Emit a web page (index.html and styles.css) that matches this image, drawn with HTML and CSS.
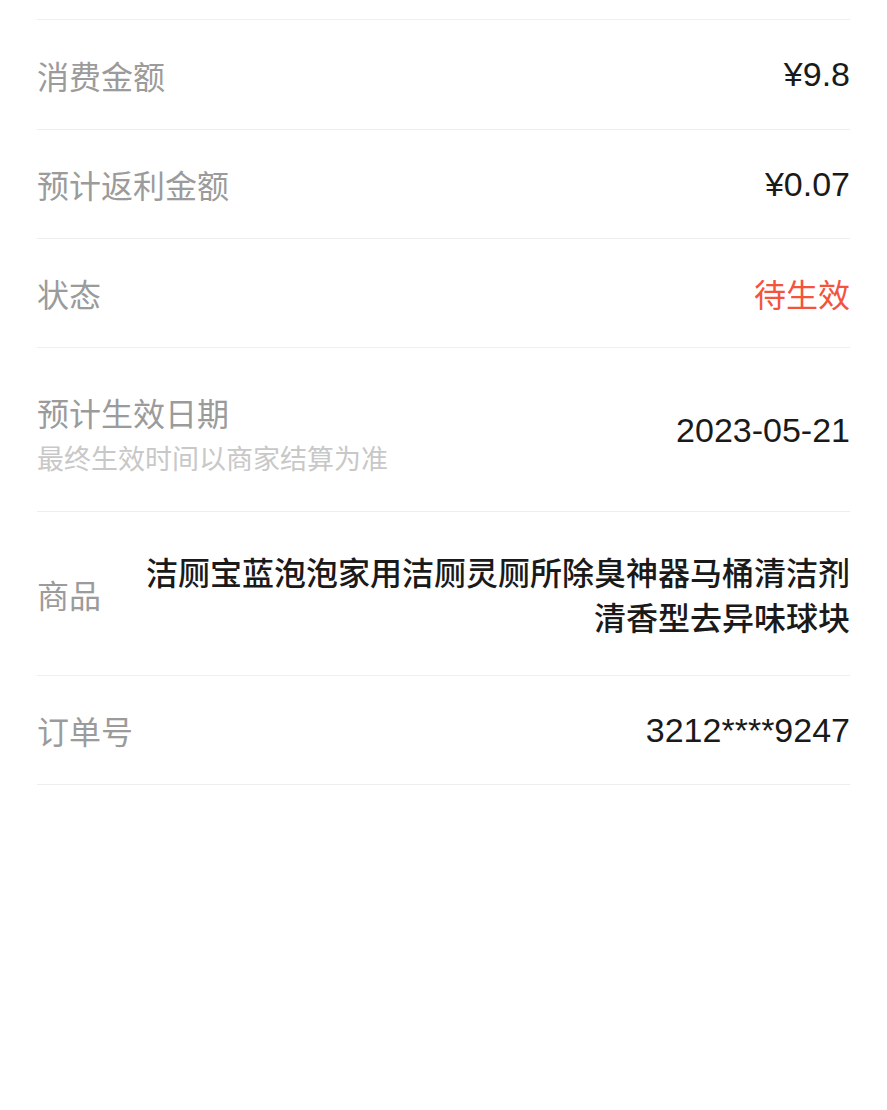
FILE: index.html
```html
<!DOCTYPE html>
<html lang="zh-CN">
<head>
  <meta charset="UTF-8">
  <meta name="viewport" content="width=device-width, initial-scale=1.0">
  <title>订单详情</title>

  <link rel="stylesheet" href="styles.css">
</head>
<body>
  <div class="list">
    <div class="top"></div>
    <div class="item">
      <div class="label">消费金额</div>
      <div class="value">¥9.8</div>
    </div>
    <div class="item">
      <div class="label">预计返利金额</div>
      <div class="value">¥0.07</div>
    </div>
    <div class="item">
      <div class="label">状态</div>
      <div class="value red">待生效</div>
    </div>
    <div class="item item-tall">
      <div class="label">
        <div>预计生效日期</div>
        <div class="sub">最终生效时间以商家结算为准</div>
      </div>
      <div class="value">2023-05-21</div>
    </div>
    <div class="item item-goods">
      <div class="label">商品</div>
      <div class="value goods">洁厕宝蓝泡泡家用洁厕灵厕所除臭神器马桶清洁剂清香型去异味球块</div>
    </div>
    <div class="item">
      <div class="label">订单号</div>
      <div class="value">3212****9247</div>
    </div>
  </div>
</body>
</html>
```

FILE: styles.css
```css
body {
  margin: 0;
  background-color: #fff;
  font-family: "Noto Sans CJK SC", "Noto Sans", sans-serif;
}

.list {
  padding: 0 37px;
}
.top {
  height: 19px;
  border-bottom: 1px solid #eee;
}

.item {
  box-sizing: border-box;
  display: flex;
  justify-content: space-between;
  align-items: center;
  min-height: 109px;
  border-bottom: 1px solid #eee;
}
.top + .item {
  min-height: 110px;
}
.label {
  flex-shrink: 0;
  font-size: 32px;
  color: #9b9b9b;
}
.value {
  font-family: "Liberation Sans", "Noto Sans CJK SC", sans-serif;
  font-size: 34px;
  color: #1a1a1a;
  text-align: right;
}
.red {
  font-family: "Noto Sans CJK SC", sans-serif;
  font-size: 32px;
  color: #f4533c;
}

/* 两行标签 */
.item-tall {
  padding: 41px 0 30px;
}
.item-tall .label {
  line-height: 46px;
}
.item-tall .value {
  margin-bottom: 10px;
}
.sub {
  font-size: 27px;
  color: #c8c8c8;
}

/* 商品名 */
.item-goods {
  padding: 37px 0 36px;
}
.goods {
  width: 712px;
  font-family: "Noto Sans CJK SC", sans-serif;
  font-size: 32px;
  font-weight: 500;
  line-height: 45px;
}
```
